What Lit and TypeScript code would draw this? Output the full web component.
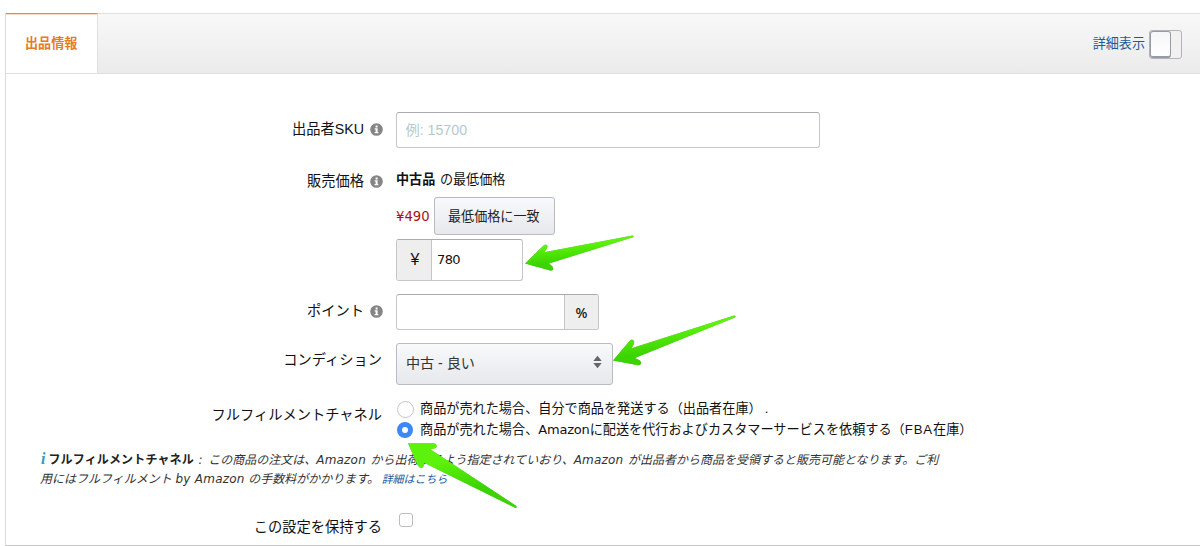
import { LitElement, html, css, svg } from "lit";
import { customElement, property } from "lit/decorators.js";

@customElement("info-dot")
class InfoDot extends LitElement {
  static styles = css`
    :host { display: block; width: 13px; height: 13px; }
    svg { display: block; }
  `;
  render() {
    return html`<svg width="13" height="13" viewBox="0 0 13 13">
      <circle cx="6.5" cy="6.5" r="6.3" fill="#858585" />
      <path d="M5.6 2.6h2v1.8h-2zM4.7 5.3h2.9v3.7h.8v1.2H4.6V9h1V6.5h-.9z" fill="#fff" />
    </svg>`;
  }
}

@customElement("form-row")
class FormRow extends LitElement {
  @property() label = "";
  @property({ type: Boolean }) info = false;
  static styles = css`
    :host { display: grid; grid-template-columns: 377px 1fr; column-gap: 14px; align-items: start; }
    .label {
      display: flex; justify-content: flex-end; align-items: center; gap: 6px;
      height: 20px; margin-top: var(--label-top, 0px);
      font-size: 14.25px; line-height: 20px; color: #111; white-space: nowrap;
    }
    info-dot { margin: 1px -1px 0 0; }
  `;
  render() {
    return html`<div class="label"><span>${this.label}</span>${this.info ? html`<info-dot></info-dot>` : ""}</div>
      <div><slot></slot></div>`;
  }
}

@customElement("app-root")
class AppRoot extends LitElement {
  static styles = css`
    :host {
      display: block; position: relative; box-sizing: border-box; width: 1200px; height: 546px;
      padding: 13px 0 0 5px; overflow: hidden; background: #fff; color: #111;
      font-family: "Liberation Sans", "Noto Sans CJK JP", sans-serif; font-size: 13.1px;
    }
    * { box-sizing: border-box; }
    .panel { height: 533px; border-left: 1px solid #dcdcdc; border-bottom: 1px solid #c8c8c8; }
    .bar {
      display: flex; justify-content: space-between; height: 61px;
      border-top: 1px solid #dedede; border-bottom: 1px solid #dfdfdf;
      background: linear-gradient(#f8f8f8, #ebebeb);
    }
    .tab {
      width: 92px; height: 60px; margin-top: -1px; padding: 20px 0 0 19px; line-height: 20px;
      border-top: 1px solid #e88b42; border-right: 1px solid #dfdfdf; background: #fff;
      box-shadow: inset 0 1px #f8d9c0;
      color: #e47b25; font-weight: 700;
    }
    .view { display: flex; gap: 4px; padding: 16px 18px 0 0; color: #1a5a9c; }
    .view span { line-height: 27px; }
    .switch { width: 33px; height: 29px; border: 1px solid #b4b5ba; border-radius: 3px; background: #f1f1f1; }
    .knob { width: 21px; height: 27px; border: 1px solid #969ba5; border-bottom-width: 2px; border-radius: 3px; background: linear-gradient(#f5f6f7, #fff); }
    form-row { margin-left: -1px; }
    .sku { margin-top: 38px; height: 59px; --label-top: 7px; }
    .price { height: 123px; --label-top: 0px; }
    .point { height: 49px; --label-top: 7px; }
    .cond { height: 57px; --label-top: 7px; }
    .chan { height: 51px; --label-top: 5px; }
    .box { border: 1px solid #c5c6cb; border-top-color: #aaabb0; border-radius: 3px; background: #fff; }
    .sku .box { width: 424px; height: 36px; padding-left: 8.5px; line-height: 34px; font-size: 14.2px; color: #b3cac8; }
    .lowest { height: 26px; line-height: 18px; white-space: pre; word-spacing: 1px; }
    .match { display: flex; gap: 5px; height: 42px; }
    .yen { color: #a91218; font: 13.2px/40px "DejaVu Sans", sans-serif; width: 33px; }
    .btn {
      border: 1px solid #b9bbc4; border-radius: 3px; background: linear-gradient(#f8f9fb, #e6e8ec); color: #333;
    }
    .match .btn { width: 121px; height: 38px; padding-left: 13px; line-height: 37px; color: #222; }
    .group { display: flex; overflow: hidden; }
    .amount { width: 127px; height: 42px; }
    .unit { display: flex; align-items: center; justify-content: center; width: 35px; background: #eee; }
    .amount .unit { border-right: 1px solid #c5c6cb; font-size: 16px; padding-left: 2px; }
    .amount .value { padding-left: 5px; font: 13px/40px "DejaVu Sans", sans-serif; letter-spacing: -.6px; }
    .percent { width: 203px; height: 36px; justify-content: flex-end; }
    .percent .unit { width: 34px; border-left: 1px solid #c5c6cb; font: 500 14px "Noto Sans", sans-serif; }
    .select { display: flex; align-items: center; justify-content: space-between; width: 217px; height: 42px; padding: 0 9px 4px; font-size: 14.1px; }
    .radio { display: flex; align-items: center; gap: 6px; height: 21px; line-height: 20px; margin-left: 1px; white-space: nowrap; font-size: 13.15px; }
    .radio.first { height: 18px; }
    .radio.second { height: 23px; }
    .dot { width: 17px; height: 17px; flex: none; border: 1px solid #c4c4c4; border-radius: 50%; background: #fff; }
    .dot.on { border: 5.5px solid #3c88f7; width: 16px; height: 16px; margin-right: 1px; }
    .latin { font-family: "DejaVu Sans", sans-serif; letter-spacing: -.2px; }
    .fba { letter-spacing: .9px; }
    .stop { margin-left: 3px; }
    .chan .latin { font-size: 13px; }
    .note { margin-left: 34px; height: 62px; font-size: 12px; line-height: 19px; color: #333; white-space: nowrap; font-style: italic; word-spacing: 1.2px; }
    .note b { font-style: normal; color: #222; letter-spacing: .15px; }
    .note .i { font: italic 700 16px/15px "Liberation Serif", serif; color: #3a99be; margin: 0 3px 0 1px; }
    .note .latin { letter-spacing: .2px; }
    .note .colon { margin-right: 1px; }
    .note .last { word-spacing: .3px; }
    .note a { color: #1a5a9c; font-size: 11px; margin-left: -1px; }
    .keep { --label-top: 4px; }
    .check { width: 14px; height: 14px; margin: 0 0 0 3px; border: 1px solid #bcbcbc; border-radius: 3px; background: #fff; }
    .arrows { position: absolute; left: 0; top: 0; pointer-events: none; filter: drop-shadow(0 0.5px 0.5px rgba(0, 0, 0, .35)); }
  `;
  render() {
    const arrows = [
      "M525 263.5L543 246Q546 243 547.5 246Q548 248 544 252.3L632.5 235.4Q634.6 236 633 237.3L549 263.5L552 266Q555 270 551 270.8Z",
      "M613 360.5L629.5 341Q632 338 634 341Q635 343 631.5 348.2L734 315.4Q736.5 315.5 735 317.4L635 358L640 360.5Q643 364.5 638 365.3Z",
      "M408 443.3L433 443.3Q437.5 443.8 436.5 447Q435 449 430 449L516 505.8Q517.5 507.8 515.5 508L424.5 463L423.3 467Q420 469.5 417.5 465Z",
    ];
    return html`
      <div class="panel">
        <div class="bar">
          <div class="tab">出品情報</div>
          <div class="view"><span>詳細表示</span><div class="switch"><div class="knob"></div></div></div>
        </div>
        <form-row class="sku" label="出品者SKU" info><div class="box">例: 15700</div></form-row>
        <form-row class="price" label="販売価格" info>
          <div class="lowest"><b>中古品</b> の最低価格</div>
          <div class="match"><span class="yen">¥490</span><div class="btn">最低価格に一致</div></div>
          <div class="box group amount"><div class="unit">¥</div><div class="value">780</div></div>
        </form-row>
        <form-row class="point" label="ポイント" info>
          <div class="box group percent"><div class="unit">%</div></div>
        </form-row>
        <form-row class="cond" label="コンディション">
          <div class="btn select"><span>中古 - 良い</span>
            <svg width="11" height="14" viewBox="0 0 11 14"><path d="M1.3 6L5.5.8 9.7 6zM1.3 8L5.5 13.2 9.7 8z" fill="#666" /></svg>
          </div>
        </form-row>
        <form-row class="chan" label="フルフィルメントチャネル">
          <div class="radio first"><div class="dot"></div><span>商品が売れた場合、自分で商品を発送する（出品者在庫）<span class="stop">.</span></span></div>
          <div class="radio second"><div class="dot on"></div><span>商品が売れた場合、<span class="latin">Amazon</span>に配送を代行およびカスタマーサービスを依頼する（<span class="fba">FBA</span>在庫）</span></div>
        </form-row>
        <div class="note">
          <div><span class="i">i</span><b>フルフィルメントチャネル</b> <span class="latin colon">:</span> この商品の注文は、<span class="latin">Amazon</span> から出荷するよう指定されていおり、<span class="latin">Amazon</span> が出品者から商品を受領すると販売可能となります。ご利</div>
          <div class="last">用にはフルフィルメント <span class="latin">by Amazon</span> の手数料がかかります。 <a>詳細はこちら</a></div>
        </div>
        <form-row class="keep" label="この設定を保持する"><div class="check"></div></form-row>
      </div>
      <svg class="arrows" width="1200" height="546" viewBox="0 0 1200 546">
        <defs><linearGradient id="g" x1="0" y1="0" x2="0.25" y2="1"><stop offset=".35" stop-color="#5cf20c" /><stop offset=".8" stop-color="#3bd400" /></linearGradient></defs>
        ${arrows.map((d) => svg`<path d=${d} fill="url(#g)" />`)}
      </svg>`;
  }
}
